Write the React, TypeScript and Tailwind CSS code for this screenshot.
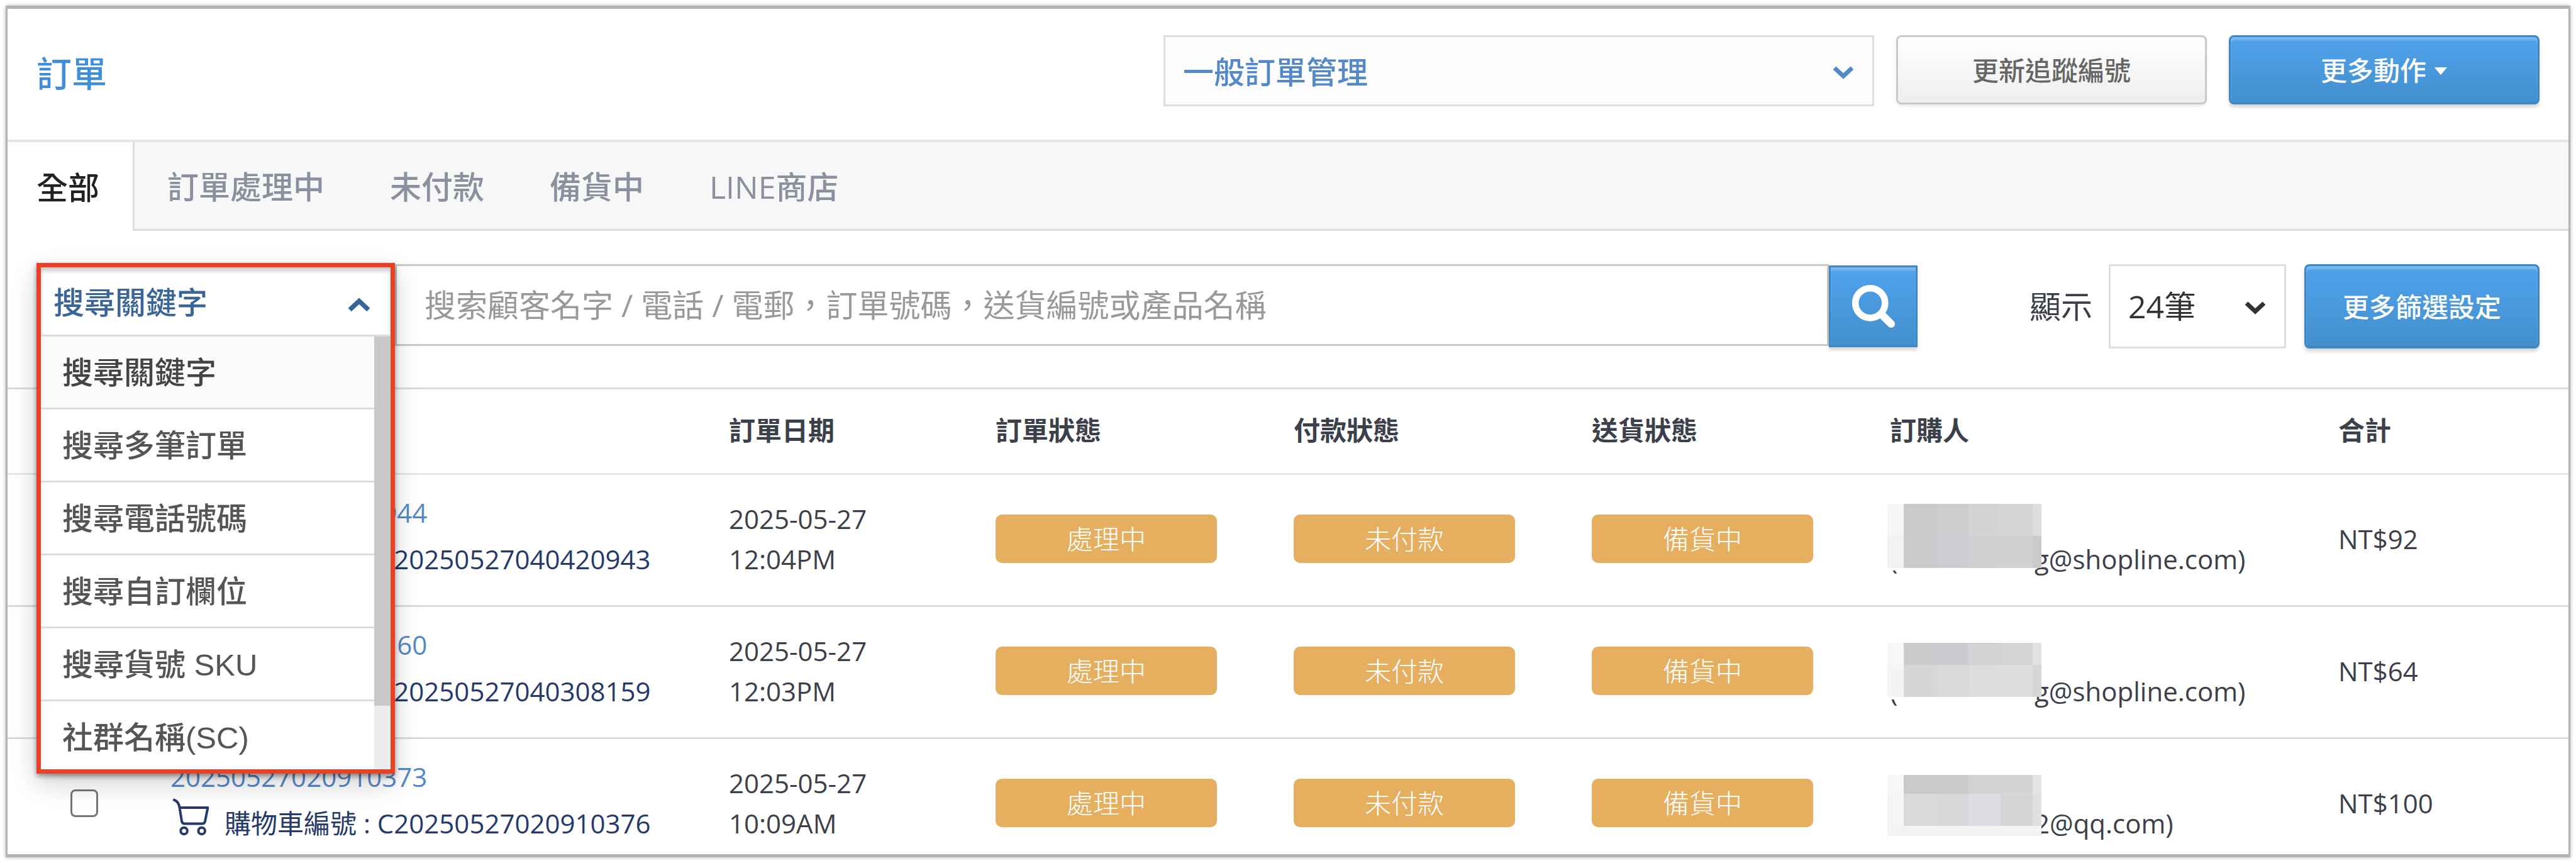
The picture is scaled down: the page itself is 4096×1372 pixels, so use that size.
import { useState } from "react";
import clsx from "clsx";

const tabs = ["訂單處理中", "未付款", "備貨中", "LINE商店"];

const searchTypes = [
  "搜尋關鍵字",
  "搜尋多筆訂單",
  "搜尋電話號碼",
  "搜尋自訂欄位",
  "搜尋貨號 SKU",
  "社群名稱(SC)",
];

// each mosaic row: [height, ...cell colors]
type Mosaic = { top: string; rows: [number, ...string[]][] };

const orders: {
  id: string;
  cart: string;
  date: string;
  time: string;
  email: string;
  total: string;
  mosaic: Mosaic;
}[] = [
  {
    id: "20250527040420944",
    cart: "C20250527040420943",
    date: "2025-05-27",
    time: "12:04PM",
    email: "g@shopline.com)",
    total: "NT$92",
    mosaic: {
      top: "top-[8px]",
      rows: [
        [51, "#f6f6f6", "#c9cacc", "#cccdcf", "#d2d3d5", "#d4d5d7", "#dcdddf"],
        [51, "#f2f2f2", "#c9cacc", "#cccdd2", "#cfd0d2", "#d1d1d3", "#c9cacc"],
      ],
    },
  },
  {
    id: "20250527040308160",
    cart: "C20250527040308159",
    date: "2025-05-27",
    time: "12:03PM",
    email: "g@shopline.com)",
    total: "NT$64",
    mosaic: {
      top: "top-[19px]",
      rows: [
        [35, "#f7f7f7", "#cacbcd", "#cbccd1", "#d2d3d5", "#d3d4d6", "#e0e1e3"],
        [51, "#f4f4f4", "#d5d6d8", "#d8d9db", "#dcdcdf", "#dddde0", "#d5d6d8"],
      ],
    },
  },
  {
    id: "20250527020910373",
    cart: "C20250527020910376",
    date: "2025-05-27",
    time: "10:09AM",
    email: "2@qq.com)",
    total: "NT$100",
    mosaic: {
      top: "top-[19px]",
      rows: [
        [30, "#f7f7f7", "#c9cacc", "#cacbcd", "#d1d2d4", "#d2d3d5", "#e3e4e6"],
        [51, "#f5f5f5", "#d8d9db", "#d6d7d9", "#dcdde0", "#d5d6d8", "#dfe0e2"],
        [16, "#f3f3f3", "#f3f3f3", "#f3f3f3", "#f3f3f3", "#f3f3f3", "#f3f3f3"],
      ],
    },
  },
];

const mosaicCols = [26, 52, 51, 51, 51, 14];

const blueButton =
  "border-[3px] border-[#3f87c3] bg-linear-to-b from-[#50a2ec] to-[#428fcc] text-white shadow-[inset_0_5px_3px_rgba(255,255,255,0.25),0_5px_5px_rgba(0,0,0,0.15)]";

const Chevron = ({ className }: { className?: string }) => (
  <svg
    viewBox="0 0 34 22"
    fill="none"
    stroke="currentColor"
    strokeWidth="7"
    className={className}
  >
    <path d="M3 4 L17 17 L31 4" />
  </svg>
);

const SearchIcon = () => (
  <svg
    viewBox="0 0 80 80"
    fill="none"
    stroke="currentColor"
    className="w-[70px] h-[70px]"
  >
    <circle cx="34" cy="34" r="27" strokeWidth="12" />
    <path d="M57 57 L72 72" strokeWidth="14" strokeLinecap="round" />
  </svg>
);

const CartIcon = () => (
  <svg
    viewBox="0 0 66 68"
    fill="none"
    stroke="currentColor"
    strokeWidth="4.5"
    strokeLinecap="round"
    strokeLinejoin="round"
    className="w-[58px] h-[60px] mt-[2px]"
  >
    <path d="M2 3 C9 5 11 10 12 17 H63 L58 42 C57 45 56 46 53 46 H21 C18 46 17 45 16 42 L12 17" />
    <circle cx="20" cy="59" r="6" />
    <circle cx="52" cy="59" r="6" />
  </svg>
);

const StatusBadge = ({ label }: { label: string }) => (
  <span className="flex items-center justify-center w-[352px] h-[77px] rounded-[10px] bg-[#e6af5f] text-white font-light">
    {label}
  </span>
);

const MosaicBlock = ({ top, rows }: Mosaic) => (
  <div className={clsx("absolute -left-1 w-[245px] pb-1", top)}>
    <div className="absolute inset-0 w-[234px] bg-white" />
    {rows.map(([height, ...colors], i) => (
      <div key={i} className="relative flex" style={{ height }}>
        {colors.map((color, j) => (
          <div
            key={j}
            style={{ width: mosaicCols[j], backgroundColor: color }}
          />
        ))}
      </div>
    ))}
  </div>
);

const SearchTypeMenu = () => {
  const [selected, setSelected] = useState(searchTypes[0]);

  return (
    <div className="absolute -top-[2px] left-0 z-10 w-full border-[7px] border-[#ea4025] bg-white text-[49px] font-medium shadow-[0_4px_8px_rgba(0,0,0,0.4),0_16px_40px_rgba(0,0,0,0.18)]">
      <button
        type="button"
        className="flex items-center justify-between w-full h-[110px] pt-1 pl-5 pr-8 border-b-[3px] border-[#dcdcdc] text-[#3a6598] shadow-[inset_0_6px_6px_rgba(0,0,0,0.2)]"
      >
        {selected}
        <Chevron className="w-9 h-6 mt-2 rotate-180" />
      </button>
      <div className="flex h-[688px] overflow-hidden font-['Liberation_Sans','Noto_Sans_CJK_TC',sans-serif]">
        <ul role="listbox" aria-label="搜尋關鍵字" className="flex-1">
          {searchTypes.map((type) => (
            <li
              key={type}
              role="option"
              aria-selected={type === selected}
              onClick={() => setSelected(type)}
              className={clsx(
                "flex items-center h-[116px] pt-1 pl-[34px] border-b-[3px] border-[#dcdcdc] cursor-pointer",
                type === selected
                  ? "bg-[#fafafa] text-[#444]"
                  : "text-[#555]"
              )}
            >
              {type}
            </li>
          ))}
        </ul>
        <div className="w-[26px] bg-[#ececec]">
          <div className="h-[587px] bg-[#c9c9c9]" />
        </div>
      </div>
    </div>
  );
};

const Header = () => (
  <header className="flex items-start gap-[35px] h-[212px] px-[46px] pt-[42px] border-b-4 border-[#e5e5e5] font-medium">
    <h1 className="flex-1 pt-5 text-[56px] leading-[80px] text-[#3f8edb]">
      訂單
    </h1>
    <div className="relative text-[49px] text-[#5489c9]">
      <select
        aria-label="訂單管理"
        className="w-[1130px] h-[113px] pt-1 pl-7 border-[3px] border-[#dedede] bg-[#fdfdfd] appearance-none"
      >
        <option>一般訂單管理</option>
      </select>
      <Chevron className="absolute right-8 top-[48px] w-[34px] h-[22px] pointer-events-none" />
    </div>
    <button
      type="button"
      className="w-[494px] h-[110px] rounded-lg border-[3px] border-[#c9c9c9] bg-linear-to-b from-white to-[#eeeeee] text-[42px] text-[#666] shadow-[0_3px_4px_rgba(0,0,0,0.08)]"
    >
      更新追蹤編號
    </button>
    <button
      type="button"
      className={clsx(
        "flex items-center justify-center gap-3 w-[494px] h-[110px] rounded-lg text-[42px]",
        blueButton
      )}
    >
      更多動作
      <svg viewBox="0 0 22 13" fill="currentColor" className="w-[22px] h-3 mt-1">
        <path d="M0 0 H22 L11 13 Z" />
      </svg>
    </button>
  </header>
);

const Tabs = () => (
  <nav className="flex h-[141px] font-medium">
    <a
      href="#all"
      className="flex items-center pt-1 pl-[46px] pr-[53px] border-r-[3px] border-[#dcdcdc] text-[#222]"
    >
      全部
    </a>
    <div className="flex items-center flex-1 gap-[104px] pt-1 pl-[52px] border-b-[3px] border-[#dcdcdc] bg-[#f7f7f7] text-[#8b909f]">
      {tabs.map((tab) => (
        <a key={tab} href={`#${tab}`}>
          {tab}
        </a>
      ))}
    </div>
  </nav>
);

const SearchBar = () => (
  <div className="flex items-start px-[46px] pt-[53px] pb-[62px]">
    <div className="relative flex flex-1">
      <div className="relative w-[570px]">
        <SearchTypeMenu />
      </div>
      <input
        type="text"
        aria-label="搜索"
        placeholder="搜索顧客名字 / 電話 / 電郵，訂單號碼，送貨編號或產品名稱"
        className="flex-1 h-[130px] pl-11 border-[3px] border-[#c9c9c9] bg-white placeholder:text-[#999]"
      />
      <button
        type="button"
        aria-label="搜尋"
        className={clsx(
          "flex items-center justify-center w-[141px] h-[130px] mt-[2px]",
          blueButton
        )}
      >
        <SearchIcon />
      </button>
    </div>
    <label
      htmlFor="page-size"
      className="ml-[178px] mr-[26px] leading-[134px] text-[#3b404a]"
    >
      顯示
    </label>
    <div className="relative mr-[29px] text-[#333]">
      <select
        id="page-size"
        className="w-[282px] h-[134px] pl-7 border-[3px] border-[#dedede] bg-white appearance-none"
      >
        <option>24筆</option>
      </select>
      <Chevron className="absolute right-8 top-[58px] w-[34px] h-[22px] pointer-events-none" />
    </div>
    <button
      type="button"
      className={clsx(
        "w-[374px] h-[134px] rounded-lg text-[42px] font-medium",
        blueButton
      )}
    >
      更多篩選設定
    </button>
  </div>
);

const OrderTable = () => (
  <table className="w-full table-fixed border-separate border-spacing-0 text-[42px] leading-16 text-left text-[#3b404a]">
    <colgroup>
      <col className="w-[259px]" />
      <col />
      <col className="w-[424px]" />
      <col className="w-[474px]" />
      <col className="w-[474px]" />
      <col className="w-[474px]" />
      <col className="w-[713px]" />
      <col className="w-[366px]" />
    </colgroup>
    <thead>
      <tr className="[&>th]:h-[139px] [&>th]:pb-1 [&>th]:border-y-[3px] [&>th]:border-t-[#dcdcdc] [&>th]:border-b-[#e8e8e8]">
        <th />
        <th />
        <th>訂單日期</th>
        <th>訂單狀態</th>
        <th>付款狀態</th>
        <th>送貨狀態</th>
        <th>訂購人</th>
        <th>合計</th>
      </tr>
    </thead>
    <tbody>
      {orders.map((order) => (
        <tr
          key={order.id}
          className="[&>td]:h-[210px] [&>td]:pb-1 [&>td]:border-b-[3px] [&>td]:border-[#dcdcdc]"
        >
          <td className="pl-[100px]">
            <input
              type="checkbox"
              aria-label={order.id}
              className="block size-11 rounded-lg border-[3px] border-[#767676] bg-white appearance-none"
            />
          </td>
          <td>
            <a href={`#${order.id}`} className="block text-[#5489c9]">
              {order.id}
            </a>
            <div className="flex h-[84px] pl-1 gap-6 leading-[84px] text-[#253a6b]">
              <CartIcon />
              <span>購物車編號 : {order.cart}</span>
            </div>
          </td>
          <td>
            {order.date}
            <br />
            {order.time}
          </td>
          <td>
            <StatusBadge label="處理中" />
          </td>
          <td>
            <StatusBadge label="未付款" />
          </td>
          <td>
            <StatusBadge label="備貨中" />
          </td>
          <td>
            <div className="relative pt-16">
              <div className="flex">
                <span className="w-[230px]">(</span>
                {order.email}
              </div>
              <MosaicBlock {...order.mosaic} />
            </div>
          </td>
          <td>{order.total}</td>
        </tr>
      ))}
    </tbody>
  </table>
);

const App = () => {
  return (
    <div className="h-screen p-[9px] bg-white text-[50px] font-['Open_Sans','Noto_Sans_CJK_TC',sans-serif]">
      <main className="h-full overflow-hidden border-x-[3px] border-y-[5px] border-[#b2b2b2] bg-white shadow-[0_0_6px_rgba(0,0,0,0.3)]">
        <Header />
        <Tabs />
        <SearchBar />
        <OrderTable />
      </main>
    </div>
  );
};

export default App;
